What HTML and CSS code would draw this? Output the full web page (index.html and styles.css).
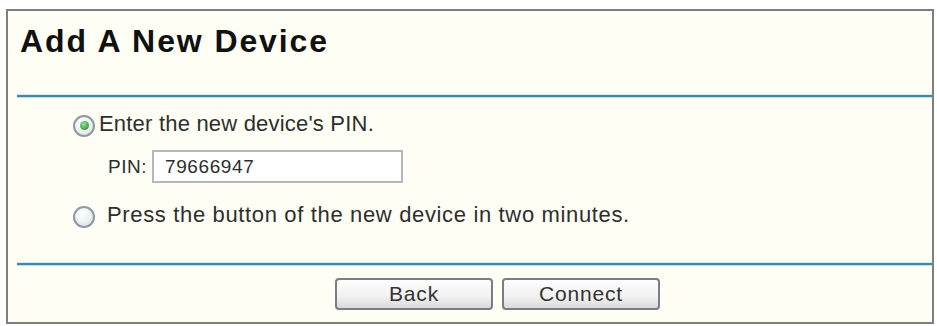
FILE: index.html
```html
<!DOCTYPE html>
<html>
<head>
<meta charset="utf-8">
<title>Add A New Device</title>
<link rel="stylesheet" href="styles.css">
</head>
<body>
<div class="panel">
  <h1 class="title">Add A New Device</h1>
  <div class="rule"></div>
  <div class="opt opt1">
    <span class="radio checked"></span>
    <span class="opt-text text1">Enter the new device's PIN.</span>
  </div>
  <div class="pin-row">
    <span class="pin-label">PIN:</span>
    <input class="pin-input" type="text" value="79666947">
  </div>
  <div class="opt opt2">
    <span class="radio"></span>
    <span class="opt-text text2">Press the button of the new device in two minutes.</span>
  </div>
  <div class="rule rule2"></div>
  <div class="buttons">
    <button class="btn">Back</button>
    <button class="btn">Connect</button>
  </div>
</div>
</body>
</html>
```

FILE: styles.css
```css
html, body {
  margin: 0;
  padding: 0;
  background: #ffffff;
}
body {
  font-family: "Liberation Sans", Arial, sans-serif;
  width: 937px;
  height: 326px;
  overflow: hidden;
}
.panel {
  box-sizing: border-box;
  margin: 9px 0 0 6px;
  width: 928px;
  border: 2px solid #7e7e7e;
  background: #fefef5;
  padding-bottom: 12px;
}
.title {
  margin: 0;
  padding: 12px 0 0 12px;
  font-size: 32px;
  line-height: 37px;
  font-weight: bold;
  letter-spacing: 1.9px;
  color: #111111;
}
.rule {
  margin: 34px 0 0 9px;
  height: 2px;
  background: #41889f;
  border-top: 1px solid #cdeef8;
  border-bottom: 1px solid #b4e4f4;
}
.opt {
  display: flex;
  align-items: center;
  padding-left: 65px;
  font-size: 22px;
  line-height: 26px;
  color: #2e2e2e;
}
.opt1 {
  margin-top: 13px;
}
.opt2 {
  margin-top: 19px;
}
.radio {
  box-sizing: border-box;
  flex: none;
  width: 22px;
  height: 22px;
  border-radius: 50%;
  border: 2px solid #8c9aa6;
  background: radial-gradient(circle at 40% 35%, #ffffff 0%, #eef0f0 50%, #d4d8da 100%);
  display: flex;
  align-items: center;
  justify-content: center;
  margin-top: 3px;
}
.radio.checked::after {
  content: "";
  width: 9px;
  height: 9px;
  border-radius: 50%;
  background: radial-gradient(circle at 40% 35%, #9be39f 0%, #3fae4a 60%, #2b8a36 100%);
}
.opt-text {
  white-space: nowrap;
}
.text1 {
  margin-left: 4px;
  letter-spacing: 0.2px;
}
.text2 {
  margin-left: 12px;
  letter-spacing: 0.65px;
}
.pin-row {
  display: flex;
  align-items: center;
  margin-top: 13px;
  padding-left: 100px;
  font-size: 19px;
  color: #2e2e2e;
}
.pin-label {
  width: 44px;
  letter-spacing: 0.5px;
}
.pin-input {
  box-sizing: border-box;
  width: 251px;
  height: 33px;
  margin: 0;
  border: 2px solid #b4b8bc;
  background: #ffffff;
  padding: 0 0 0 11px;
  font-family: "Liberation Sans", Arial, sans-serif;
  font-size: 19px;
  letter-spacing: 0.6px;
  color: #2e2e2e;
  outline: none;
}
.rule2 {
  margin-top: 34px;
}
.buttons {
  display: flex;
  gap: 9px;
  margin-top: 12px;
  padding-left: 327px;
}
.btn {
  box-sizing: border-box;
  width: 158px;
  height: 32px;
  margin: 0;
  padding: 0;
  border: 2px solid #7a7e84;
  border-radius: 4px;
  background: linear-gradient(#fdfdfd 0%, #f1f1f1 60%, #dadada 100%);
  font-family: "Liberation Sans", Arial, sans-serif;
  font-size: 21px;
  letter-spacing: 0.8px;
  color: #333333;
  line-height: 28px;
}
```
